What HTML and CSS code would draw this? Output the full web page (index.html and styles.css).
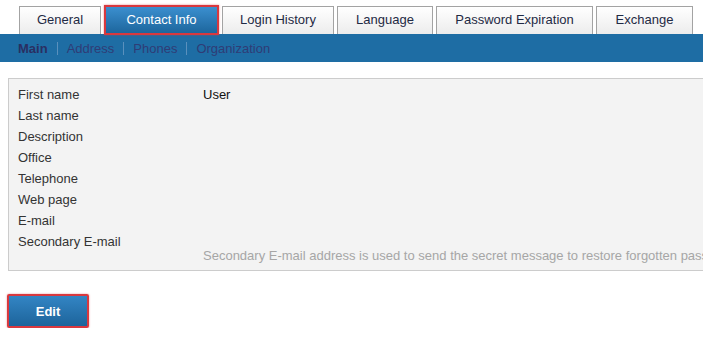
FILE: index.html
```html
<!DOCTYPE html>
<html lang="en">
  <head>
    <meta charset="UTF-8" />
    <meta name="viewport" content="width=device-width, initial-scale=1.0" />
    <title>User Properties</title>
    <link rel="stylesheet" href="styles.css">
  </head>
  <body>
    <div class="tabs">
      <div class="tab tab-general">General</div>
      <div class="tab tab-contact active">Contact Info</div>
      <div class="tab tab-login">Login History</div>
      <div class="tab tab-lang">Language</div>
      <div class="tab tab-pass">Password Expiration</div>
      <div class="tab tab-exch">Exchange</div>
    </div>

    <div class="subnav">
      <span class="sub-item current">Main</span>
      <span class="sep"></span>
      <span class="sub-item">Address</span>
      <span class="sep"></span>
      <span class="sub-item">Phones</span>
      <span class="sep"></span>
      <span class="sub-item">Organization</span>
    </div>

    <div class="panel">
      <div class="row"><div class="label">First name</div><div class="value">User</div></div>
      <div class="row"><div class="label">Last name</div><div class="value"></div></div>
      <div class="row"><div class="label">Description</div><div class="value"></div></div>
      <div class="row"><div class="label">Office</div><div class="value"></div></div>
      <div class="row"><div class="label">Telephone</div><div class="value"></div></div>
      <div class="row"><div class="label">Web page</div><div class="value"></div></div>
      <div class="row"><div class="label">E-mail</div><div class="value"></div></div>
      <div class="row">
        <div class="label">Secondary E-mail</div>
        <div class="value">
          <div class="hint">Secondary E-mail address is used to send the secret message to restore forgotten password</div>
        </div>
      </div>
    </div>

    <div class="actions">
      <button class="edit-btn">Edit</button>
    </div>
  </body>
</html>
```

FILE: styles.css
```css
body {
  margin: 0;
  font-family: "Liberation Sans", Arial, sans-serif;
  font-size: 13px;
  color: #222;
  background: #fff;
  overflow: hidden;
}
.tabs {
  display: flex;
  height: 28px;
  padding: 6px 0 0 19px;
}
.tab {
  box-sizing: border-box;
  height: 28px;
  margin-right: 3px;
  border: 1px solid #a3a3a3;
  border-bottom: none;
  background: linear-gradient(#ffffff, #ececec);
  color: #1f2a44;
  text-align: center;
  line-height: 26px;
  white-space: nowrap;
}
.tab-general { width: 82px; }
.tab-contact { width: 115px; }
.tab-login { width: 112px; }
.tab-lang { width: 96px; }
.tab-pass { width: 157px; }
.tab-exch { width: 97px; }
.tab.active {
  position: relative;
  z-index: 1;
  height: 30px;
  margin-top: -1px;
  border: 2px solid #d9383e;
  background: linear-gradient(#3b8fcf, #1d669d);
  color: #fff;
  line-height: 25px;
  box-shadow: 0 0 2px rgba(217, 56, 62, 0.6);
}
.subnav {
  display: flex;
  align-items: center;
  height: 28px;
  padding-left: 18px;
  background: #1e6da4;
}
.sub-item {
  color: #2f3c76;
}
.sub-item.current {
  font-weight: bold;
  color: #2a2f62;
}
.sep {
  width: 1px;
  height: 13px;
  margin: 0 9px;
  background: #5a90bd;
}
.panel {
  width: 760px;
  margin: 16px 0 0 8px;
  padding: 5px 9px 4px;
  border: 1px solid #cccccc;
  background: #f3f3f3;
}
.row {
  display: flex;
  line-height: 21px;
}
.label {
  width: 185px;
  flex-shrink: 0;
  color: #333;
}
.value {
  color: #111;
  white-space: nowrap;
}
.hint {
  margin-top: 14px;
  color: #a6a6a6;
}
.actions {
  padding: 23px 0 0 7px;
}
.edit-btn {
  width: 82px;
  height: 34px;
  border: 2px solid #d9383e;
  border-radius: 2px;
  background: linear-gradient(#3385c4, #1d649b);
  color: #fff;
  font-family: "Liberation Sans", Arial, sans-serif;
  font-size: 13px;
  font-weight: bold;
  box-shadow: 0 0 2px rgba(217, 56, 62, 0.6);
  cursor: pointer;
}
```
